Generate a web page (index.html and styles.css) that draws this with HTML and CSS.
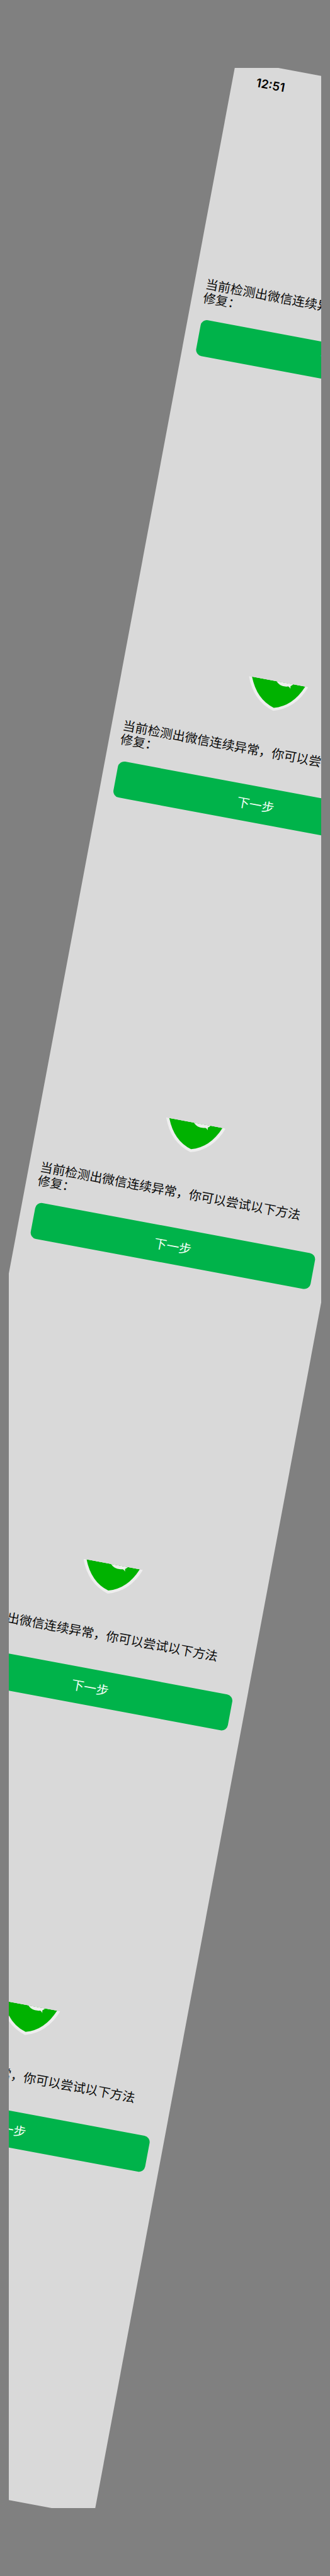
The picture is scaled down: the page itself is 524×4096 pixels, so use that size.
FILE: index.html
```html
<!DOCTYPE html>
<html lang="zh-CN">
<head>
<meta charset="utf-8">
<meta name="viewport" content="width=device-width, initial-scale=1">
<title>微信连续异常</title>
<link rel="stylesheet" href="styles.css">
</head>
<body>
<svg class="defs" aria-hidden="true">
  <symbol id="shield" viewBox="0 0 154 77">
    <path fill="#eeeeee" d="M0 0Q22 60 77 76Q132 60 154 0Z"/>
    <path fill="#00b200" d="M8 0Q30 55 77 68Q124 55 146 0Z"/>
    <path fill="#eeeeee" d="M71 0C74 2 76 5 82 7.500C86 9.500 97 10 103 8C106 8.500 108 10 110 13C109.500 10 109 8 109 6C112 4 114 2 115 0Z"/>
  </symbol>
</svg>
<main class="frame">
  <div class="sheet">
    <header class="status"><time class="clock">12:51</time></header>
    <section class="panel">
      <svg class="shield"><use href="#shield"/></svg>
      <p class="message">当前检测出微信连续异常，你可以尝试以下方法修复：</p>
      <button class="next" type="button">下一步</button>
    </section>
    <section class="panel">
      <svg class="shield"><use href="#shield"/></svg>
      <p class="message">当前检测出微信连续异常，你可以尝试以下方法修复：</p>
      <button class="next" type="button">下一步</button>
    </section>
    <section class="panel">
      <svg class="shield"><use href="#shield"/></svg>
      <p class="message">当前检测出微信连续异常，你可以尝试以下方法修复：</p>
      <button class="next" type="button">下一步</button>
    </section>
    <section class="panel">
      <svg class="shield"><use href="#shield"/></svg>
      <p class="message">当前检测出微信连续异常，你可以尝试以下方法修复：</p>
      <button class="next" type="button">下一步</button>
    </section>
    <section class="panel">
      <svg class="shield"><use href="#shield"/></svg>
      <p class="message">当前检测出微信连续异常，你可以尝试以下方法修复：</p>
      <button class="next" type="button">下一步</button>
    </section>
  </div>
</main>
</body>
</html>
```

FILE: styles.css
```css
* {
  box-sizing: border-box;
}

body {
  margin: 0;
  padding: 108px 14px;
  background: #808080;
  color: #0c0c0c;
  font-family: "Liberation Sans", "Noto Sans CJK SC", sans-serif;
}

.defs {
  display: none;
}

.frame {
  overflow: hidden;
}

.sheet {
  padding: 20px 18px 65px;
  background: #d9d9d9;
  transform: rotate(10.6deg);
}

.status {
  padding: 0 20px 205px;
}

.clock {
  display: block;
  color: #000;
  font: 600 19px/20px Inter, sans-serif;
}

.panel {
  display: flex;
  flex-direction: column;
  padding-bottom: 486px;
}

.shield {
  align-self: center;
  width: 96px;
  height: 48px;
}

.message {
  margin: 54px 0 24px;
  padding-right: 32px;
  font-family: "Noto Sans CJK SC", sans-serif;
  font-size: 20px;
  line-height: 22px;
}

.next {
  margin: 0 4px;
  padding: 14px;
  border: 0;
  border-radius: 10px;
  background: #00b34a;
  color: #f2fff6;
  font-family: "Noto Sans CJK SC", sans-serif;
  font-size: 20px;
  line-height: 30px;
}
```
